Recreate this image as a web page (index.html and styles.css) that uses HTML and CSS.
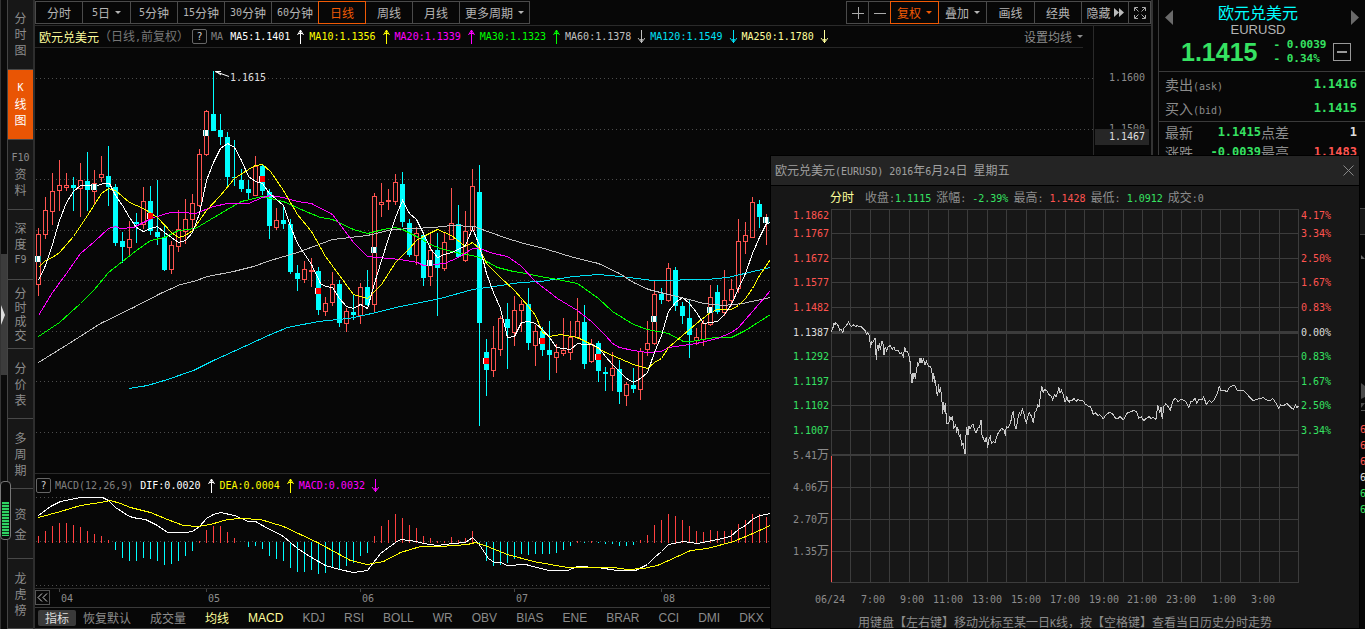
FILE: index.html
```html
<!DOCTYPE html>
<html lang="zh-CN">
<head>
<meta charset="utf-8">
<title>欧元兑美元 EURUSD</title>
<link rel="stylesheet" href="styles.css">
</head>
<body>
<div class="app">
  <aside class="rail">
    <div class="gutter">
      <div class="gutter-thumb"><svg width="5" height="20" viewBox="0 0 5 20"><path d="M0 0L4 10L0 20z" fill="#ddd"/></svg></div>
      <div class="meter"><div class="meter-fill"></div></div>
    </div>
    <nav class="views">
      <button class="view"><span>分</span><span>时</span><span>图</span></button>
      <button class="view active"><span class="n">K</span><span>线</span><span>图</span></button>
      <button class="view"><span class="n">F10</span><span>资</span><span>料</span></button>
      <button class="view"><span>深</span><span>度</span><span class="n">F9</span></button>
      <button class="view dense"><span>分</span><span>时</span><span>成</span><span>交</span></button>
      <button class="view"><span>分</span><span>价</span><span>表</span></button>
      <button class="view"><span>多</span><span>周</span><span>期</span></button>
      <button class="view loose"><span>资</span><span>金</span></button>
      <button class="view"><span>龙</span><span>虎</span><span>榜</span></button>
    </nav>
  </aside>

  <main class="main">
    <div class="toolbar">
      <div class="group">
        <button class="tool">分时</button>
        <button class="tool wide"><span class="n">5</span>日<i class="caret"></i></button>
        <button class="tool"><span class="n">5</span>分钟</button>
        <button class="tool"><span class="n">15</span>分钟</button>
        <button class="tool"><span class="n">30</span>分钟</button>
        <button class="tool"><span class="n">60</span>分钟</button>
        <button class="tool on">日线</button>
        <button class="tool">周线</button>
        <button class="tool">月线</button>
        <button class="tool more">更多周期<i class="caret"></i></button>
      </div>
      <div class="group">
        <button class="tool icon" aria-label="放大"><svg width="12" height="12" viewBox="0 0 12 12"><path d="M0 6.5H12M6.5 0V12" stroke="#aaa"/></svg></button>
        <button class="tool icon" aria-label="缩小"><svg width="12" height="12" viewBox="0 0 12 12"><path d="M0 6.5H12" stroke="#aaa"/></svg></button>
        <button class="tool wide on">复权<i class="caret"></i></button>
        <button class="tool wide">叠加<i class="caret"></i></button>
        <button class="tool wide">画线</button>
        <button class="tool">经典</button>
        <button class="tool tight">隐藏<svg width="10" height="9" viewBox="0 0 10 9"><path d="M0 0L5 4.5L0 9zM5 0L10 4.5L5 9z" fill="#bbb"/></svg></button>
        <button class="tool icon" aria-label="全屏"><svg width="14" height="14" viewBox="0 0 14 14"><path d="M1.5 5V1.5H5M9 1.5H12.5V5M12.5 9V12.5H9M5 12.5H1.5V9M2 2L5.5 5.5M12 2L8.500 5.500M12 12L8.500 8.500M2 12L5.500 8.500" fill="none" stroke="#aaa"/></svg></button>
      </div>
    </div>

    <div class="plot">
      <div class="panes">
        <div class="legend ma">
          <strong class="pair">欧元兑美元</strong>
          <span class="mode">（日线<span class="n">,</span>前复权）</span>
          <button class="help n">?</button>
          <span class="n dim">MA</span>
          <span class="n item c-white">MA5:1.1401<svg class="arr"><use href="#up"/></svg></span>
          <span class="n item c-yellow">MA10:1.1356<svg class="arr"><use href="#up"/></svg></span>
          <span class="n item c-pink">MA20:1.1339<svg class="arr"><use href="#up"/></svg></span>
          <span class="n item c-green">MA30:1.1323<svg class="arr"><use href="#up"/></svg></span>
          <span class="n item c-grey">MA60:1.1378<svg class="arr"><use href="#down"/></svg></span>
          <span class="n item c-cyan">MA120:1.1549<svg class="arr"><use href="#down"/></svg></span>
          <span class="n item c-cream">MA250:1.1780<svg class="arr"><use href="#down"/></svg></span>
          <button class="setma">设置均线<i class="caret"></i></button>
        </div>
        <svg class="chart" id="kline"></svg>
        <div class="legend macd">
          <button class="help n">?</button>
          <span class="n dim">MACD(12,26,9)</span>
          <span class="n item c-white">DIF:0.0020<svg class="arr"><use href="#up"/></svg></span>
          <span class="n item c-yellow">DEA:0.0004<svg class="arr"><use href="#up"/></svg></span>
          <span class="n item c-pink">MACD:0.0032<svg class="arr"><use href="#down"/></svg></span>
        </div>
        <svg class="osc" id="macd"></svg>
        <div class="months">
          <button class="back" aria-label="向左"><svg width="11" height="9" viewBox="0 0 11 9"><path d="M5 0.500L1 4.500L5 8.500M10 0.500L6 4.500L10 8.500" fill="none" stroke="#ccc"/></svg></button>
          <svg class="axis" id="months"></svg>
        </div>
      </div>
      <div class="prices n">
        <span class="p1">1.1600</span>
        <span class="p2">1.1500</span>
        <span class="cursor">1.1467</span>
      </div>
    </div>

    <nav class="tabs">
      <button class="tab cn sel">指标</button>
      <button class="tab cn">恢复默认</button>
      <button class="tab cn">成交量</button>
      <button class="tab cn lit">均线</button>
      <button class="tab lit">MACD</button>
      <button class="tab">KDJ</button>
      <button class="tab">RSI</button>
      <button class="tab">BOLL</button>
      <button class="tab">WR</button>
      <button class="tab">OBV</button>
      <button class="tab">BIAS</button>
      <button class="tab">ENE</button>
      <button class="tab">BRAR</button>
      <button class="tab">CCI</button>
      <button class="tab">DMI</button>
      <button class="tab">DKX</button>
    </nav>
  </main>

  <aside class="side">
    <header class="quote">
      <button class="nav" aria-label="上一个"><svg width="8" height="15" viewBox="0 0 8 15"><path d="M8 0V15L0 7.500z" fill="#6a6a6a"/></svg></button>
      <div class="quote-body">
        <h1>欧元兑美元</h1>
        <div class="code">EURUSD</div>
        <div class="last">
          <span class="price">1.1415</span>
          <span class="chg n"><span>- 0.0039</span><span>- 0.34%</span></span>
          <button class="minus" aria-label="删除自选"></button>
        </div>
      </div>
      <button class="nav" aria-label="下一个"><svg width="8" height="15" viewBox="0 0 8 15"><path d="M0 0V15L8 7.500z" fill="#6a6a6a"/></svg></button>
    </header>
    <dl class="book">
      <dt>卖出<span class="n">(ask)</span></dt><dd class="n">1.1416</dd>
      <dt>买入<span class="n">(bid)</span></dt><dd class="n">1.1415</dd>
    </dl>
    <dl class="stats">
      <dt>最新</dt><dd class="n">1.1415</dd><dt>点差</dt><dd class="n flat">1</dd>
      <dt>涨跌</dt><dd class="n">-0.0039</dd><dt>最高</dt><dd class="n rise">1.1483</dd>
    </dl>
    <div class="edge n">
      <div class="edge-box"></div>
      <svg width="5" height="32" viewBox="0 0 5 32"><path d="M1 20L5 24H1z" fill="#666"/></svg>
      <svg class="edge-grip" width="5" height="32" viewBox="0 0 5 32"><path d="M1 0L5 3V14L1 16zM1 20H5L1 25z" fill="#4a4a4a"/><path d="M1 27.500H5" stroke="#555"/></svg>
      <span class="rise">6</span><span class="rise">6</span><span class="rise">6</span><span class="flat">6</span><span>6</span><span>6</span>
    </div>
  </aside>

  <section class="popup">
    <header class="popup-head">
      <h2>欧元兑美元<span class="n">(EURUSD) 2016</span>年<span class="n">6</span>月<span class="n">24</span>日<span class="n"> </span>星期五</h2>
      <button class="close" aria-label="关闭"><svg width="11" height="11" viewBox="0 0 11 11"><path d="M0.500 0.500L10.500 10.500M10.500 0.500L0.500 10.500" stroke="#888"/></svg></button>
    </header>
    <div class="facts">
      <strong>分时</strong>
      <span>收盘<span class="n">:</span><span class="n fall">1.1115</span></span>
      <span>涨幅<span class="n">: </span><span class="n fall">-2.39%</span></span>
      <span>最高<span class="n">: </span><span class="n rise">1.1428</span></span>
      <span>最低<span class="n">: </span><span class="n fall">1.0912</span></span>
      <span>成交<span class="n">:0</span></span>
    </div>
    <svg class="intraday" id="intraday"></svg>
    <p class="hint">用键盘【左右键】移动光标至某一日<span class="n">K</span>线，按【空格键】查看当日历史分时走势</p>
  </section>
</div>

<svg class="defs">
  <symbol id="up" viewBox="0 0 8 14"><path d="M4.500 0V14M2 3.500H7" stroke="currentColor"/><path d="M4.500 0L1.500 5M4.500 0L7.500 5" stroke="currentColor" fill="none"/></symbol>
  <symbol id="down" viewBox="0 0 8 14"><path d="M4.500 0V13M1 8L4.500 12.500L8 8" stroke="currentColor" fill="none"/><path d="M3 9H6L4.500 13z" fill="currentColor"/></symbol>
</svg>
<script src="chart.js"></script>
</body>
</html>
```
FILE: styles.css
```css
* { box-sizing: border-box; }
body {
  margin: 0;
  background: #070707;
  color: #8c8c8c;
  font: 12px/16px "Noto Sans CJK SC", "Liberation Sans", sans-serif;
}
button {
  margin: 0;
  padding: 0;
  border: 0;
  background: none;
  color: inherit;
  font: inherit;
  cursor: pointer;
}
svg { display: block; flex: none; }
.defs { position: absolute; width: 0; height: 0; }
.n { font-family: "DejaVu Sans Mono", monospace; font-size: 10px; white-space: pre; }

.app {
  position: relative;
  display: grid;
  grid-template-columns: 35px minmax(0, 1fr) 212px;
  height: 100vh;
  overflow: hidden;
}

/* left rail */
.rail { display: flex; border-right: 2px solid #2e2e2e; background: #171717; }
.gutter {
  position: relative;
  width: 8px;
  border-left: 1px solid #333;
  border-right: 1px solid #444;
  background: #0b0b0b;
  padding-top: 254px;
}
.gutter-thumb { display: flex; align-items: center; height: 121px; background: #3c3c3c; }
.meter {
  position: absolute;
  left: -1px;
  bottom: 89px;
  width: 11px;
  height: 59px;
  padding: 20px 1px 3px;
  border: 1px solid #777;
  border-radius: 4px;
  background: #0b0b0b;
}
.meter-fill { height: 100%; background: repeating-linear-gradient(#2fd463 0 2px, #0b3318 2px 3px); }
.views { display: flex; flex: 1; flex-direction: column; }
.view {
  display: flex;
  flex: 1;
  flex-direction: column;
  align-items: center;
  justify-content: center;
  border-bottom: 1px solid #484848;
  line-height: 16px;
}
.view span { height: 16px; line-height: 16px; }
.view.dense span { height: 14px; line-height: 14px; }
.view.loose span { height: 20px; line-height: 20px; }
.view.active { background: #e95504; color: #fff; }

/* toolbar */
.main { display: flex; flex-direction: column; min-width: 0; border-right: 2px solid #333; }
.toolbar {
  display: flex;
  justify-content: space-between;
  height: 26px;
  padding-top: 1px;
  border-bottom: 1px solid #2a2a2a;
}
.group { display: flex; height: 23px; }
.tool {
  display: flex;
  align-items: center;
  justify-content: center;
  width: 48px;
  border: 1px solid #4a4a4a;
  color: #b4b4b4;
}
.tool + .tool { margin-left: -1px; }
.tool.wide { width: 49px; }
.tool.more { width: 71px; }
.tool.icon { width: 23px; }
.tool.tight { gap: 3px; }
.tool.on { position: relative; border-color: #f05a05; color: #f05a05; }
.caret {
  margin-left: 5px;
  border: 3px solid transparent;
  border-top-color: currentColor;
  border-bottom: 0;
}

/* chart panes */
.plot { display: flex; flex: 1; min-height: 0; }
.panes { display: flex; flex: 1; flex-direction: column; min-width: 0; overflow: hidden; }
.legend { display: flex; align-items: center; white-space: nowrap; }
.ma { height: 22px; margin-right: 10px; padding-left: 4px; border-bottom: 1px solid #262626; }
.macd { height: 24px; padding-left: 1px; border-top: 1px solid #2a2a2a; }
.pair { color: #ffff9c; font-weight: 400; }
.mode { color: #777; }
.help {
  width: 15px;
  height: 15px;
  margin-right: 4px;
  border: 1px solid #666;
  border-radius: 2px;
  color: #ccc;
  line-height: 13px;
}
.mode + .help { margin-left: 3px; }
.dim { margin-right: 7px; color: #808080; }
.item { display: flex; align-items: center; gap: 6px; margin-right: 5px; }
.arr { width: 8px; height: 14px; }
.setma { display: flex; align-items: center; margin-left: auto; }
.chart { flex: 1; width: 100%; min-height: 0; }
.osc { width: 100%; height: 91px; }
.months { display: flex; height: 19px; border-top: 1px solid #2a2a2a; }
.back {
  display: flex;
  align-items: center;
  justify-content: center;
  width: 15px;
  height: 15px;
  margin-top: 1px;
  border: 1px solid #555;
}
.axis { flex: 1; height: 18px; }
.prices {
  position: relative;
  display: flex;
  flex-direction: column;
  width: 58px;
  padding: 44px 6px 0 0;
  border-left: 1px solid #2a2a2a;
  text-align: right;
}
.p2 { margin-top: 35px; }
.cursor {
  position: absolute;
  top: 103px;
  left: 1px;
  right: 2px;
  padding-right: 4px;
  background: #262626;
  color: #ddd;
}
.c-white { color: #fff; }
.c-yellow { color: #ff0; }
.c-pink { color: #f0f; }
.c-green { color: #0f0; }
.c-grey { color: #c0c0c0; }
.c-cyan { color: #00e1f5; }
.c-cream { color: #ffff9c; }

/* indicator tabs */
.tabs {
  display: flex;
  gap: 19px;
  align-items: center;
  height: 22px;
  padding-left: 3px;
  overflow: hidden;
  border-top: 1px solid #3a3a3a;
  border-bottom: 1px solid #3a3a3a;
  font-family: "Liberation Sans", Arial, sans-serif;
}
.tab { white-space: nowrap; }
.cn { font-family: "Noto Sans CJK SC", sans-serif; }
.sel { margin-right: -12px; padding: 0 7px; border-radius: 2px; background: #3a3a3a; color: #ddd; }
.lit { color: #ffff9c; }

/* quote panel */
.side { margin-left: 5px; border-left: 1px solid #3a3a3a; }
.quote { display: flex; justify-content: space-between; height: 72px; padding: 2px 6px 0; border-bottom: 1px solid #3a3a3a; }
.nav { align-self: flex-start; margin-top: 8px; }
.quote-body { flex: 1; text-align: center; }
.quote h1 { margin: 0; padding-right: 8px; color: #0ff; font-size: 16px; font-weight: 400; line-height: 20px; }
.code { padding-right: 8px; color: #b4b4b4; font: 13px/16px "Liberation Sans", Arial, sans-serif; }
.last { display: flex; align-items: center; padding-left: 8px; color: #36e262; }
.price { font: bold 25px/26px "Liberation Sans", Arial, sans-serif; }
.chg { display: flex; flex: 1; flex-direction: column; padding-left: 16px; font-size: 11px; font-weight: 700; line-height: 14px; text-align: left; }
.minus {
  display: grid;
  place-items: center;
  width: 18px;
  height: 18px;
  border: 1px solid #999;
}
.minus::before { content: ""; width: 10px; height: 2px; background: #999; }
dl { display: grid; margin: 0; padding: 0 8px 0 6px; border-bottom: 1px solid #3a3a3a; font-size: 14px; }
dd { margin: 0; color: #36e262; text-align: right; }
dl dd.n { font-size: 12px; font-weight: 700; }
.book { grid-template-columns: 1fr 1fr; grid-auto-rows: 24px; align-content: start; line-height: 24px; height: 50px; }
.stats { grid-template-columns: 44px 52px 40px 1fr; line-height: 20px; border: 0; }
.rise, dl dd.rise { color: #ff5450; }
.fall { color: #36e262; }
.flat, dl dd.flat { color: #ddd; }
.edge {
  display: flex;
  flex-direction: column;
  width: 5px;
  margin: 46px 0 0 auto;
  overflow: hidden;
  color: #36e262;
}
.edge-box { height: 27px; border: solid #444; border-width: 1px 0; background: #171717; }
.edge-grip { margin: 116px 0 7px; }

/* intraday popup */
.popup {
  position: absolute;
  top: 155px;
  right: 5px;
  bottom: 0;
  width: 590px;
  overflow: hidden;
  border: 1px solid #000;
  background: #171717;
}
.popup-head {
  display: flex;
  align-items: center;
  justify-content: space-between;
  height: 30px;
  padding: 0 5px 0 4px;
  border-bottom: 1px solid #000;
  background: #242424;
  color: #a0a0a0;
}
.popup h2 { margin: 0; font-size: 12px; font-weight: 400; }
.facts { display: flex; gap: 5px; height: 22px; padding: 3px 0 0 59px; white-space: nowrap; }
.facts strong { margin-right: 6px; color: #ffff9c; font-weight: 400; }
.intraday { width: 100%; height: 402px; }
.hint { margin: 4px 0 0; text-align: center; white-space: nowrap; }

/* svg */
svg text { font: 10px "DejaVu Sans Mono", "Noto Sans CJK SC", monospace; fill: #8c8c8c; }
svg .cjk { font-size: 12px; }
.dots { stroke: #4c4c4c; stroke-dasharray: 1 3; shape-rendering: crispEdges; }
.line { fill: none; stroke-width: 1; shape-rendering: crispEdges; }
.crisp { shape-rendering: crispEdges; }
.grid { fill: none; stroke: #3c3c3c; shape-rendering: crispEdges; }
svg text.up { fill: #ff5450; }
svg text.dn { fill: #36e262; }
svg text.mid { fill: #ddd; }
```
FILE: chart.js
```javascript
// Daily bars: high, body top, body bottom, low, direction (1 = rise)
const bars = [
[228,234,285,296,1],[197,210,235,239,1],[173,191,212,225,1],[160,185,191,211,1],[173,185,188,191,1],[177,185,188,211,0],[163,180,189,217,1],[152,181,190,211,0],[170,183,192,205,1],[156,174,178,182,1],
[146,176,187,206,0],[184,187,243,246,0],[232,241,247,263,0],[221,239,248,256,1],[213,222,224,243,0],[187,201,225,229,1],[186,201,231,235,0],[180,232,237,245,0],[226,237,270,271,0],[241,245,270,274,1],
[210,229,247,252,1],[199,219,232,244,1],[194,203,220,232,1],[149,154,206,207,1],[110,111,155,156,1],[71,114,131,131,0],[114,130,137,145,0],[132,137,177,187,0],[140,177,178,186,0],[169,180,189,192,0],
[180,189,193,200,0],[156,166,196,196,1],[164,166,191,195,0],[189,192,226,239,0],[208,220,228,230,1],[206,220,224,229,0],[219,224,272,274,0],[265,273,279,291,0],[261,269,280,283,1],[258,270,272,287,1],
[267,271,310,315,0],[297,303,312,316,1],[272,284,303,306,1],[280,284,323,327,0],[308,311,324,332,1],[294,312,315,320,0],[283,287,316,324,1],[270,287,305,306,0],[193,196,305,312,1],[183,202,205,217,1],
[189,200,202,210,1],[174,182,202,205,1],[172,184,222,227,0],[219,223,255,257,0],[227,233,256,265,1],[232,235,278,286,0],[234,250,277,286,1],[233,250,268,316,0],[232,242,269,271,1],[188,223,240,240,1],
[205,224,257,258,0],[211,231,261,262,1],[169,186,231,231,1],[165,192,323,426,0],[339,352,370,396,0],[326,348,371,377,1],[316,318,350,356,1],[303,319,328,369,0],[296,310,333,346,1],[300,304,311,332,1],
[288,304,343,350,0],[325,331,346,366,1],[327,331,350,356,0],[321,350,355,380,0],[344,352,358,373,1],[318,350,354,356,1],[321,337,353,360,1],[298,321,338,339,1],[305,322,364,369,0],[339,344,362,363,1],
[341,343,371,382,0],[367,372,374,391,0],[352,368,376,391,1],[360,369,392,404,0],[382,384,396,406,1],[368,385,389,393,0],[348,351,390,400,1],[321,343,350,356,1],[281,294,344,345,1],[288,294,300,304,0],
[263,268,301,302,1],[267,270,306,311,0],[302,306,316,324,0],[300,318,335,358,0],[328,337,341,345,1],[320,323,340,346,1],[285,297,325,326,1],[285,292,312,314,0],[270,300,313,316,1],[279,289,301,306,1],
[219,241,289,293,1],[222,235,242,254,1],[197,202,238,238,1],[200,204,217,228,0],[214,217,222,245,1]];

// Event marks: bar index, y, colour
const marks = [[0,256,'w'],[8,184,'w'],[24,130,'w'],[48,247,'w'],[56,260,'w'],[88,316,'w'],[96,307,'w'],[104,217,'w'],
[16,213,'r'],[32,176,'r'],[40,288,'r'],[64,358,'r'],[72,338,'r'],[80,354,'r']];

const averages = {
'#00e1f5':'129,388 147,385 167,379 193,370 213,360 233,351 270,334 287,327 318,321 348,318 367,314 400,306 440,298 472,289 500,285 520,282 540,281 573,276 598,274 620,276 653,280 707,279 727,277 770,267',
'#c0c0c0':'38,362 67,344 100,323 133,307 160,293 180,284 193,281 207,276 233,271 253,266 270,260 297,252 332,239 367,235 392,229 433,227 451,225 474,226 487,231 507,238 520,242 547,249 573,257 598,263 619,273 633,282 648,289 668,294 689,299 703,303 723,305 742,303 770,297',
'#00ff00':'38,336 59,322 80,303 94,289 108,272 122,261 136,250 150,240 164,237 178,230 195,228 210,219 227,209 241,201 262,196 270,198 283,201 303,210 320,217 332,219 353,229 367,233 383,229 395,227 402,229 416,236 430,244 440,248 451,251 465,254 472,255 479,257 497,267 513,271 520,272 540,276 557,279 577,283 598,298 612,311 633,324 647,329 668,333 683,341 690,341 715,337 731,337 745,330 770,314',
'#ff00ff':'38,315 52,292 66,273 80,253 94,241 108,228 115,226 120,228 133,227 143,222 153,217 170,212 182,212 195,213 213,206 227,203 248,203 262,197 270,195 283,197 297,201 311,203 332,214 353,242 367,256 400,259 417,262 423,265 444,263 458,257 472,248 479,248 493,253 507,256 520,265 535,281 557,298 577,310 591,321 605,335 612,343 619,347 633,350 647,352 661,351 668,347 696,343 717,338 731,332 738,327 752,311 770,290',
'#ffff00':'38,267 45,260 52,257 59,252 73,236 87,215 101,193 108,188 115,190 129,202 143,208 157,217 171,232 178,237 185,235 192,230 206,210 220,195 234,178 248,169 255,165 262,164 270,171 283,190 297,214 311,231 325,256 339,275 353,294 360,296 367,298 381,284 395,262 409,248 416,240 423,236 437,229 451,235 465,246 472,242 479,248 486,263 500,277 514,290 521,298 528,306 535,315 542,332 549,336 560,334 577,337 591,344 605,352 619,358 633,364 647,368 654,362 661,358 668,347 682,335 696,323 710,312 717,309 731,309 738,305 745,298 752,288 759,275 770,259',
'#ffffff':'38,280 45,265 52,244 59,220 66,202 73,191 80,185 97,185 103,183 109,183 115,195 122,205 129,217 136,227 143,231 150,228 157,226 164,232 171,237 178,242 185,240 192,232 199,213 206,180 213,162 220,148 227,143 234,147 241,160 248,176 255,181 262,183 269,193 283,205 290,226 297,243 311,264 320,283 325,286 332,287 339,298 346,306 353,308 360,304 367,308 374,283 381,260 388,238 395,217 402,200 409,213 416,219 423,233 430,248 437,257 444,254 451,252 458,249 465,245 472,228 479,245 486,273 493,292 500,308 507,337 514,336 521,322 528,321 535,323 542,329 549,337 556,347 570,349 577,343 584,344 591,344 598,347 605,356 612,364 619,371 626,378 633,382 640,378 647,372 654,352 661,335 668,311 675,302 682,297 689,303 696,312 703,323 717,321 724,314 731,304 738,288 745,273 752,253 759,237 766,223 770,222'
};

// MACD histogram tips; the zero line is at 542
const hist = [536,531,526,523,523,525,527,531,534,536,540,550,558,561,561,558,559,561,565,564,561,556,551,541,530,526,526,532,538,542,547,546,549,556,559,561,568,572,572,570,574,573,568,569,566,563,556,553,536,526,520,514,518,525,528,536,538,541,541,537,540,538,531,544,561,566,565,563,559,554,555,554,554,554,553,550,546,541,543,541,543,544,544,546,546,545,540,535,525,520,514,516,520,526,531,532,530,531,531,530,524,520,514,514,517];
const dif = '38,515 50,506 60,501 80,497 102,497 108,500 115,507 129,516 137,518 145,519 157,525 167,532 185,532 192,531 199,526 206,518 213,514 220,512 234,515 248,521 255,521 262,525 283,536 297,548 311,557 325,565 339,569 353,572 367,570 380,553 395,542 400,539 416,541 423,543 437,545 452,543 465,542 472,537 478,543 488,558 494,562 500,562 507,565 525,564 548,570 567,570 577,566 597,567 617,570 635,570 647,564 654,557 661,551 668,544 683,541 697,543 717,539 730,536 738,529 745,525 753,518 760,515 770,513';
const dea = '38,517 60,511 80,505 100,502 110,500 120,503 130,507 150,512 167,519 183,525 197,526 210,524 227,519 240,518 260,519 283,526 317,542 350,560 367,564 383,561 400,552 420,546 440,546 467,544 475,542 487,546 507,554 533,561 567,567 613,567 627,569 643,568 657,565 677,556 690,550 707,548 733,541 750,534 770,525';

const X0 = 35, STEP = 7;
const barX = i => 38 + STEP * i;
const rect = (x, y, w, h, fill) => `<rect x="${x}" y="${y}" width="${w}" height="${h}" fill="${fill}"/>`;
const dots = y => `<line class="dots" x1="1" x2="100%" y1="${y}.5" y2="${y}.5"/>`;
const poly = (pts, color) => `<polyline class="line" points="${pts}" stroke="${color}"/>`;

function drawKline() {
  let s = [78,129,179,230,280,331,381,432].map(y => dots(y - 48)).join('');
  s += `<g transform="translate(-${X0} -48)"><g class="crisp">`;
  bars.forEach(([h, t, b, l, rise], i) => {
    const x = barX(i);
    if (rise) {
      s += rect(x, h, 1, t - h, '#ff5450') + rect(x, b, 1, l - b, '#ff5450');
      s += `<rect x="${x - 1.5}" y="${t + 0.5}" width="4" height="${Math.max(1, b - t - 1)}" fill="none" stroke="#ff5450"/>`;
    } else {
      s += rect(x, h, 1, l - h, '#0ff') + rect(x - 2, t, 5, b - t, '#0ff');
    }
  });
  s += '</g><g transform="translate(0.5 0.5)">';
  for (const c in averages) s += poly(averages[c], c);
  s += '</g><g class="crisp">';
  marks.forEach(([i, y, k]) => {
    const x = barX(i);
    s += rect(x - 3, y, 6, 6, '#fff');
    s += k === 'r' ? rect(x - 2, y, 5, 6, '#f00') : rect(x - 2, y, 1, 6, '#19a0a0') + rect(x + 2, y, 1, 6, '#19a0a0');
  });
  s += '</g><path d="M215.500 71.500H221M216 71.500L221 75M215 71.500L229 76.500" fill="none" stroke="#fff"/>';
  s += '<text class="mid" x="230" y="81">1.1615</text></g>';
  document.getElementById('kline').innerHTML = s;
}

function drawMacd() {
  let s = [0, 44, 88].map(dots).join('') + `<g transform="translate(-${X0} -497)"><g class="crisp">`;
  hist.forEach((y, i) => {
    s += y < 542 ? rect(barX(i), y, 1, 543 - y, '#ff4040') : rect(barX(i), 542, 1, y - 542, '#0ff');
  });
  s += '</g><g transform="translate(0.5 0.5)">' + poly(dif, '#fff') + poly(dea, '#ff0') + '</g></g>';
  document.getElementById('macd').innerHTML = s;

  document.getElementById('months').innerHTML = [[59,'04'],[206,'05'],[360,'06'],[514,'07'],[661,'08']]
    .map(([x, t]) => rect(x - 50, 0, 1, 3, '#444') + `<text x="${x - 48}" y="13">${t}</text>`).join('');
}

// Minute prices as x, y pairs, three units per pixel
const minutes = [184,457,190,440,192,430,195,436,197,428,205,437,209,450,213,447,218,458,223,442,228,438,236,426,240,436,245,440,249,434,257,440,262,436,268,441,274,440,280,447,286,452,289,462,292,457,298,466,302,505,304,484,308,488,315,474,319,540,322,495,325,512,328,490,331,510,336,483,339,492,342,524,346,500,350,512,354,500,361,497,367,508,372,500,376,512,385,512,390,522,394,518,400,530,404,502,408,516,411,512,417,527,419,545,421,545,423,582,426,610,429,580,431,598,433,578,436,597,439,572,443,550,446,555,450,533,453,550,455,535,458,550,460,535,465,555,469,542,475,558,482,558,486,580,488,605,491,580,494,608,497,600,499,635,503,648,506,612,508,640,511,620,515,650,518,703,521,665,524,695,526,670,530,730,536,732,539,708,543,720,547,708,552,745,557,732,560,758,563,740,568,770,571,765,575,795,579,790,585,823,587,775,590,740,594,765,597,738,600,748,605,735,609,732,614,752,618,758,624,745,629,740,633,720,636,765,640,775,645,785,649,770,653,803,656,780,661,770,664,790,670,785,675,788,683,762,687,755,695,745,702,750,706,767,709,740,715,742,722,727,726,705,730,692,734,735,738,748,744,715,748,698,752,706,757,688,762,702,766,720,769,730,775,705,778,698,784,708,790,728,795,695,799,692,803,675,807,680,811,650,815,617,820,640,823,628,830,632,838,645,843,648,848,660,853,645,858,650,863,638,866,620,870,640,874,630,880,645,884,665,887,665,890,648,893,660,900,668,898,662,905,662,912,655,918,664,925,658,930,662,940,663,945,672,955,678,962,680,970,703,976,698,983,706,990,704,1000,716,1010,702,1020,697,1030,704,1036,714,1043,716,1050,710,1061,720,1068,704,1075,697,1084,695,1092,690,1100,697,1106,714,1114,710,1121,722,1128,716,1137,710,1144,716,1150,712,1158,718,1163,675,1169,700,1173,682,1177,718,1181,680,1187,672,1193,678,1201,690,1209,662,1216,655,1225,665,1232,658,1240,660,1248,665,1256,683,1262,665,1268,664,1275,655,1280,670,1288,657,1295,660,1301,650,1309,673,1318,662,1325,667,1332,660,1340,645,1348,620,1353,632,1362,630,1370,636,1380,620,1388,617,1395,617,1400,630,1410,632,1418,630,1428,638,1438,650,1450,662,1465,657,1480,653,1490,660,1500,662,1508,655,1518,670,1526,685,1532,675,1540,678,1550,670,1560,680,1570,688,1577,675,1581,684,1585,678];

function drawIntraday() {
  let s = '<g transform="translate(-771 -208)">';
  let d = '';
  for (let i = 0; i <= 24; i++) d += `M${Math.round(831 + i * 19.46)}.5 209V583`;
  const rows = [233,258,282,307,356,381,405,430,487,519,551];
  d += [209, ...rows, 582].map(y => `M831 ${y}.5H1299`).join('');
  s += `<path class="grid" d="${d}"/>`;
  s += '<g class="crisp">' + rect(831, 331, 468, 3, '#3c3c3c') + rect(831, 454, 468, 2, '#3c3c3c') + rect(831, 456, 1, 126, '#ff5450') + '</g>';
  let pts = '';
  for (let i = 0; i < minutes.length; i += 2) pts += `${(770 + minutes[i] / 3).toFixed(1)},${(180 + minutes[i + 1] / 3).toFixed(1)} `;
  s += poly(pts, '#c8c8c8');
  const ys = [215,233,258,282,307,332,356,381,405,430];
  const left = ['1.1862','1.1767','1.1672','1.1577','1.1482','1.1387','1.1292','1.1197','1.1102','1.1007'];
  const right = ['4.17%','3.34%','2.50%','1.67%','0.83%','0.00%','0.83%','1.67%','2.50%','3.34%'];
  ys.forEach((y, i) => {
    const c = i < 5 ? 'up' : i === 5 ? 'mid' : 'dn';
    s += `<text class="${c}" x="829" y="${y + 4}" text-anchor="end">${left[i]}</text><text class="${c}" x="1301" y="${y + 4}">${right[i]}</text>`;
  });
  [['5.41',455],['4.06',487],['2.70',519],['1.35',551]].forEach(([t, y]) => {
    s += `<text x="829" y="${y + 4}" text-anchor="end">${t}<tspan class="cjk">万</tspan></text>`;
  });
  [['06/24',830],['7:00',873],['9:00',912],['11:00',948],['13:00',987],['15:00',1026],['17:00',1065],['19:00',1104],['21:00',1142],['23:00',1181],['1:00',1224],['3:00',1263]]
    .forEach(([t, x]) => { s += `<text x="${x}" y="603" text-anchor="middle">${t}</text>`; });
  document.getElementById('intraday').innerHTML = s + '</g>';
}

drawKline();
drawMacd();
drawIntraday();
```
